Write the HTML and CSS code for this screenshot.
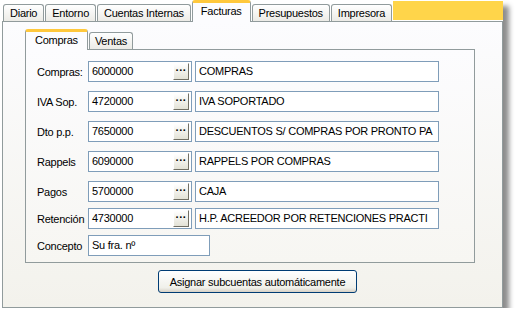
FILE: index.html
```html
<!DOCTYPE html>
<html lang="es">
<head>
    <meta charset="UTF-8">
    <title>Facturas</title>
    <link rel="stylesheet" href="styles.css">
</head>
<body>

    <div class="window">
        <div class="tabs">
            <div class="tab">Diario</div>
            <div class="tab">Entorno</div>
            <div class="tab">Cuentas Internas</div>
            <div class="tab active">Facturas</div>
            <div class="tab">Presupuestos</div>
            <div class="tab">Impresora</div>
            <div class="tab-fill"></div>
        </div>

        <div class="panel">
            <div class="subtabs">
                <div class="tab active">Compras</div>
                <div class="tab">Ventas</div>
            </div>

            <div class="subpanel">
                <div class="row">
                    <label>Compras:</label>
                    <div class="account"><span>6000000</span><button class="dots">···</button></div>
                    <div class="field desc">COMPRAS</div>
                </div>
                <div class="row">
                    <label>IVA Sop.</label>
                    <div class="account"><span>4720000</span><button class="dots">···</button></div>
                    <div class="field desc">IVA SOPORTADO</div>
                </div>
                <div class="row">
                    <label>Dto p.p.</label>
                    <div class="account"><span>7650000</span><button class="dots">···</button></div>
                    <div class="field desc">DESCUENTOS S/ COMPRAS POR PRONTO PA</div>
                </div>
                <div class="row">
                    <label>Rappels</label>
                    <div class="account"><span>6090000</span><button class="dots">···</button></div>
                    <div class="field desc">RAPPELS POR COMPRAS</div>
                </div>
                <div class="row tight">
                    <label>Pagos</label>
                    <div class="account"><span>5700000</span><button class="dots">···</button></div>
                    <div class="field desc">CAJA</div>
                </div>
                <div class="row tight">
                    <label>Retención</label>
                    <div class="account"><span>4730000</span><button class="dots">···</button></div>
                    <div class="field desc">H.P. ACREEDOR POR RETENCIONES PRACTI</div>
                </div>
                <div class="row last">
                    <label>Concepto</label>
                    <div class="field concept">Su fra. nº</div>
                </div>
            </div>

            <div class="actions">
                <button class="btn">Asignar subcuentas automáticamente</button>
            </div>
        </div>
    </div>

</body>
</html>
```

FILE: styles.css
```css
body {
    margin: 0;
    background-color: #fff;
    font-family: Tahoma, "Liberation Sans", Arial, sans-serif;
    font-size: 11px;
    letter-spacing: -0.25px;
    color: #000;
}

.window {
    width: 503px;
    height: 308px;
    background-color: #fff;
    box-shadow: 6px 6px 5px rgba(0, 0, 0, 0.45);
}

/* pestañas */

.tabs {
    display: flex;
    align-items: flex-end;
    height: 21px;
    padding-left: 3px;
    box-sizing: border-box;
}

.tab {
    height: 17px;
    padding: 0 6px;
    margin-right: 1px;
    border: 1px solid #919b9c;
    border-bottom: none;
    border-radius: 3px 3px 0 0;
    background: linear-gradient(#fff, #ecebe6);
    line-height: 17px;
    white-space: nowrap;
    box-sizing: border-box;
}

.tab.active {
    position: relative;
    z-index: 1;
    height: 22px;
    margin-bottom: -1px;
    padding: 0 8px;
    border-top: 3px solid #ffc83c;
    background: #fcfcfe;
    line-height: 16px;
}

.tab-fill {
    flex: 1;
    height: 19px;
    margin-bottom: 1px;
    background-color: #ffd54a;
}

.panel {
    height: 287px;
    margin-left: 2px;
    border: 1px solid #919b9c;
    background: linear-gradient(#fcfcfe, #f3f2ec);
    padding: 7px 0 0 22px;
    box-sizing: border-box;
}

.subtabs {
    display: flex;
    align-items: flex-end;
    height: 20px;
}

.subtabs .tab {
    padding: 0 5px;
}

.subtabs .tab.active {
    height: 21px;
    padding: 0 9px;
}

/* campos */

.subpanel {
    width: 450px;
    height: 214px;
    padding: 11px 0 0 11px;
    border: 1px solid #919b9c;
    background: linear-gradient(#fcfcfe, #f7f6f2);
    box-sizing: border-box;
}

.row {
    display: flex;
    align-items: center;
    height: 21px;
    margin-bottom: 9px;
}

.row.tight {
    margin-bottom: 6px;
}

.row label {
    width: 51px;
    white-space: nowrap;
}

.account,
.field {
    height: 21px;
    border: 1px solid #7f9db9;
    background-color: #fff;
    box-sizing: border-box;
    line-height: 19px;
    padding-left: 3px;
    white-space: nowrap;
    overflow: hidden;
}

.account {
    display: flex;
    justify-content: space-between;
    align-items: center;
    width: 104px;
    padding-right: 2px;
}

.desc {
    width: 244px;
    margin-left: 3px;
}

.concept {
    width: 122px;
}

.dots {
    width: 16px;
    height: 17px;
    padding: 0 0 3px;
    border: 1px solid;
    border-color: #fff #716f64 #716f64 #fff;
    background: linear-gradient(#fff, #e3e2d6);
    font-family: "Liberation Sans", Arial, sans-serif;
    font-size: 11px;
    font-weight: bold;
    line-height: 10px;
    letter-spacing: 0;
    color: #000;
}

/* botón */

.actions {
    padding: 7px 0 0 133px;
}

.btn {
    width: 199px;
    height: 23px;
    border: 1px solid #003c74;
    border-radius: 3px;
    background: linear-gradient(#fff, #f0f0ea 80%, #d6d0c5);
    font-family: Tahoma, "Liberation Sans", Arial, sans-serif;
    font-size: 11px;
    letter-spacing: -0.25px;
    color: #000;
}
```
